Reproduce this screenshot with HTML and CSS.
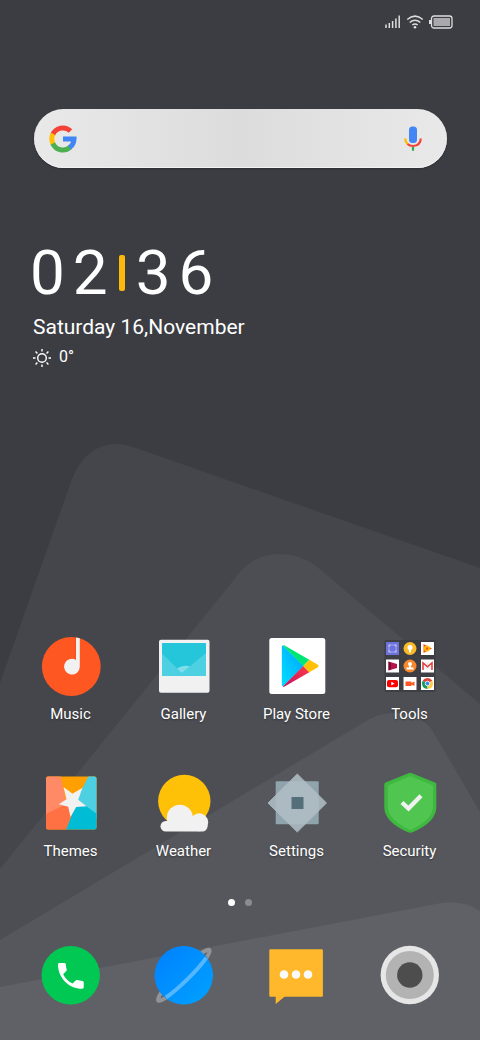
FILE: index.html
```html
<!DOCTYPE html>
<html lang="en">
<head>
<meta charset="utf-8">
<meta name="viewport" content="width=device-width, initial-scale=1">
<title>Home screen</title>
<link rel="stylesheet" href="styles.css">
</head>
<body>
<svg class="wallpaper" viewBox="0 0 480 1040" preserveAspectRatio="none" aria-hidden="true">
  <path fill="#45464b" d="M0 683L72 479Q86 444 117 444Q125 444 133 447L480 568V1040H0Z"/>
  <path fill="#4d4e53" d="M0 869L241 571Q256 554 280 554Q300 554 316 566L480 704V1040H0Z"/>
  <path fill="#56575c" d="M0 940L368 720Q380 713 395 713Q420 713 432 730L480 812V1040H0Z"/>
  <path fill="#606166" d="M0 987L436 904Q462 899 480 911V1040H0Z"/>
</svg>
<main class="screen">
  <header class="status">
    <svg width="16" height="14" viewBox="0 0 16 14" role="img" aria-label="Signal"><path stroke="#dedee0" stroke-width="1.500" d="M1 13V9.500M4.300 13V8M7.600 13V6M10.900 13V3.500M14.200 13V.5"/></svg>
    <svg width="18" height="14" viewBox="0 0 18 14" role="img" aria-label="Wi-Fi"><g fill="none" stroke="#dedee0" stroke-width="1.500"><path d="M1.200 4.500Q9-2.200 16.800 4.500M3.700 7.500Q9 3 14.300 7.500M6.300 10Q9 7.800 11.700 10"/></g><circle cx="9" cy="12.300" r="1.300" fill="#dedee0"/></svg>
    <svg width="24" height="14" viewBox="0 0 24 14" role="img" aria-label="Battery"><rect x="2.500" y="1" width="20.500" height="12" rx="2.500" fill="none" stroke="#dedee0" stroke-width="1.300"/><rect x="4.500" y="3" width="16.500" height="8" fill="#a9a9ac"/><path fill="#dedee0" d="M0 5h2v4H0z"/></svg>
  </header>

  <form class="search" role="search">
    <svg width="28" height="28" viewBox="0 0 28 28" aria-hidden="true"><g fill="none" stroke-width="5"><path stroke="#f44336" d="M3.800 9.500A11 11 0 0 1 21.500 6"/><path stroke="#ffc107" d="M4.100 8.900A11 11 0 0 0 4.100 19.100"/><path stroke="#4caf50" d="M3.800 18.500A11 11 0 0 0 21.200 22.200"/><path stroke="#4285f4" d="M14 14H25A11 11 0 0 1 20.600 22.600"/></g></svg>
    <input class="search-input" type="text" aria-label="Search">
    <button class="mic" type="button" aria-label="Voice search">
      <svg width="20" height="28" viewBox="0 0 20 28" aria-hidden="true"><rect x="6" y="1.500" width="8" height="16.500" rx="3.500" fill="#4285f4"/><g fill="none" stroke-width="2.200"><path stroke="#fbbc05" d="M2.200 13.500Q2.200 17 4.700 19.200"/><path stroke="#f44336" d="M4.500 19Q6.500 21 10 21Q17.500 20.500 17.800 13.500"/><path stroke="#34a853" d="M10 22v3.700"/></g></svg>
    </button>
  </form>

  <section class="clock" aria-label="Clock">
    <div class="time"><span>0</span><span>2</span><i class="time-bar"></i><span>3</span><span>6</span></div>
    <div class="date">Saturday 16,November</div>
    <div class="temp">
      <svg width="20" height="20" viewBox="0 0 20 20" role="img" aria-label="Sunny"><g fill="none" stroke="#fff" stroke-width="1.400"><circle cx="9" cy="11" r="4.300"/><path d="M9 2v2.500M9 17.500V20M0 11h2.500M15.500 11H18M2.600 4.600l1.800 1.800M13.600 15.600l1.800 1.800M2.600 17.400l1.800-1.800M13.600 6.400l1.800-1.800"/></g></svg>
      <span>0°</span>
    </div>
  </section>

  <nav class="apps" aria-label="Apps">
    <a class="app" href="#music">
      <svg class="icon" viewBox="0 0 60 60" aria-hidden="true"><circle cx="30.300" cy="30.500" r="29.400" fill="#ff5722"/><path fill="#d94a1e" opacity=".5" d="M34.300 1.700h1v22h-1z"/><path fill="#f1f1f1" d="M35 1.500l3.800.7V30.500A7.900 7.900 0 1 1 35 23.900Z"/></svg>
      <span>Music</span>
    </a>
    <a class="app" href="#gallery">
      <svg class="icon" viewBox="0 0 60 60" aria-hidden="true"><rect x="5" y="3.700" width="50.500" height="53" rx="2" fill="#f1f1f1"/><path fill="#26c6da" d="M8 7h44v33H8z"/><path fill="#4dd0e1" d="M8 17.500L27.700 37 52 17V40H8z"/><path fill="#80deea" d="M23 32.500Q28.500 28.500 36 30.300L27.700 37Z"/></svg>
      <span>Gallery</span>
    </a>
    <a class="app" href="#play">
      <svg class="icon" viewBox="0 0 60 60" aria-hidden="true">
        <defs><linearGradient id="play-blue" x1="1" y1="0" x2="0" y2="1"><stop offset="0" stop-color="#00a0ff"/><stop offset="1" stop-color="#00e0ff"/></linearGradient><linearGradient id="play-red" x1="1" y1="0" x2="0" y2="1"><stop offset="0" stop-color="#ff3a44"/><stop offset="1" stop-color="#c31162"/></linearGradient></defs>
        <rect x="2.300" y="2" width="56" height="56" rx="2.500" fill="#fff"/>
        <path fill="url(#play-blue)" d="M15.800 9.400Q14.800 9.600 14.800 11V49Q14.800 50.300 15.800 50.600L36.800 30Z"/>
        <path fill="#00e676" d="M15.800 9.400Q16.500 9 17.600 9.600L42.300 23.800 36.300 30Z"/>
        <path fill="url(#play-red)" d="M15.800 50.600Q16.500 51 17.600 50.400L42.300 36.200 36.300 30Z"/>
        <path fill="#ffc107" d="M42.300 23.800L50.500 28.500Q52.500 30 50.500 31.500L42.300 36.200 36.300 30Z"/>
      </svg>
      <span>Play Store</span>
    </a>
    <a class="app" href="#tools">
      <svg class="icon" viewBox="0 0 60 60" aria-hidden="true">
        <rect x="4.500" y="4" width="51" height="52" rx="2" fill="#35363b" opacity=".6"/>
        <g transform="translate(6 6)"><rect width="13" height="13" fill="#6c72d9"/><path fill="none" stroke="#c5c8ff" stroke-width="1.200" d="M3 5V3h2M8 3h2v2M10 8v2H8M5 10H3V8"/><path fill="none" stroke="#a3a8f2" d="M3 5v3M10 5v3M5 3h3M5 10h3"/></g>
        <g transform="translate(23.500 6)"><circle cx="6.500" cy="6.500" r="6.500" fill="#fbb829"/><circle cx="6.500" cy="5.500" r="2.500" fill="#fff"/><path fill="#fff" d="M5.500 7h2v3.500h-2z"/></g>
        <g transform="translate(41 6)"><path fill="#fff" d="M0 0h13v13H0z"/><path fill="#f4511e" d="M2.500 2v9l8.500-4.500z"/><circle cx="6" cy="6.500" r="3" fill="#ffc107"/><circle cx="6" cy="6.500" r="1.200" fill="#f4511e"/></g>
        <g transform="translate(6 23.500)"><path fill="#fff" d="M0 0h13v13H0z"/><path fill="#b8124a" d="M2.500 2L11 4.500v4L2.500 11z"/><path fill="#760c36" d="M2.500 2v9L5 9.500v-6z"/></g>
        <g transform="translate(23.500 23.500)"><circle cx="6.500" cy="6.500" r="6.500" fill="#f5892c"/><circle cx="6.500" cy="4.500" r="2" fill="#fff"/><path fill="#fff" d="M5.500 6h2v2h2.500v2H3V8h2.500z"/></g>
        <g transform="translate(41 23.500)"><path fill="#fff" d="M0 0h13v13H0z"/><path fill="#eceff1" d="M2 3h9v7H2z"/><path fill="none" stroke="#e53935" stroke-width="1.500" d="M2 10.500V3.300l4.500 3.900L11 3.300v7.200"/></g>
        <g transform="translate(6 41)"><path fill="#fff" d="M0 0h13v13H0z"/><rect x="1" y="3" width="11" height="7.300" rx="2" fill="#f00"/><path fill="#fff" d="M5.300 4.800v3.600l3.200-1.800z"/></g>
        <g transform="translate(23.500 41)"><path fill="#fff" d="M0 0h13v13H0z"/><path fill="#ff5722" d="M2 4.500h6v4.500H2zM8 6l3-1.500v4.500L8 7.500z"/></g>
        <g transform="translate(41 41)"><path fill="#fff" d="M0 0h13v13H0z"/><path fill="#db4437" d="M6.500 6.500L1.700 3.800A5.500 5.500 0 0 1 11.300 3.800Z"/><path fill="#0f9d58" d="M6.500 6.500L1.700 3.800A5.500 5.500 0 0 0 6.500 12Z"/><path fill="#ffcd40" d="M6.500 6.500L11.300 3.800A5.500 5.500 0 0 1 6.500 12Z"/><circle cx="6.500" cy="6.500" r="2.300" fill="#4285f4" stroke="#fff" stroke-width=".8"/></g>
      </svg>
      <span>Tools</span>
    </a>
    <a class="app" href="#themes">
      <svg class="icon" viewBox="0 0 60 60" aria-hidden="true">
        <defs><clipPath id="theme-tile"><rect x="5" y="3.500" width="50.500" height="53" rx="2"/></clipPath></defs>
        <g clip-path="url(#theme-tile)"><path fill="#ffa000" d="M5 3h52v54H5z"/><path fill="#ff8a65" d="M5 3h14.500L25.500 30 30 34 5 44z"/><path fill="#4dd0e1" d="M47.500 3H57V46L33 32z"/><path fill="#ff7043" d="M5 41l20-10 8 5-8 21H5z"/><path fill="#00bcd4" d="M25 57l10-26 3-3 19 13.700V57z"/></g>
        <path fill="#f1f1f1" d="M22.500 14l9 6.700 10-6-4.300 12 8.300 6.600-10.300.7L29.500 44l-2.300-10.300-9.400-2.400 7.700-5z"/>
      </svg>
      <span>Themes</span>
    </a>
    <a class="app" href="#weather">
      <svg class="icon" viewBox="0 0 60 60" aria-hidden="true"><circle cx="30.300" cy="28" r="26.200" fill="#ffc107"/><g fill="#f1f1f1"><circle cx="25.800" cy="44.700" r="13"/><circle cx="45.200" cy="49.300" r="9"/><rect x="6.500" y="48" width="47" height="10.500" rx="5.200"/></g></svg>
      <span>Weather</span>
    </a>
    <a class="app" href="#settings">
      <svg class="icon" viewBox="0 0 60 60" aria-hidden="true"><rect x="8.700" y="8.300" width="43" height="43" rx="1" fill="#90a4ae"/><path fill="#b0bec5" stroke="#b0bec5" stroke-linejoin="round" opacity=".88" d="M30.300 1L59.500 30 30.300 59 1 30z"/><path fill="#546e7a" d="M24.500 24h12v12h-12z"/></svg>
      <span>Settings</span>
    </a>
    <a class="app" href="#security">
      <svg class="icon" viewBox="0 0 60 60" aria-hidden="true"><path fill="#3fb83f" d="M28.500.2Q30.300-.9 32 .2L55 9.500Q56.300 10.200 56.300 11.500V34Q56.300 49 32.500 59.300 30.300 60 28 59.300 4.300 49 4.300 34V11.500Q4.300 10.200 5.500 9.500Z"/><path fill="#50c650" d="M30.300 3L53 12.500V34Q52.500 47 30.300 57 8.300 47 7.800 34V12.500Z"/><path fill="none" stroke="#f1f1f1" stroke-width="4.300" d="M22 29.500l6.500 6L41 22.800"/></svg>
      <span>Security</span>
    </a>
  </nav>

  <div class="pages" aria-hidden="true"><i class="dot dot-active"></i><i class="dot"></i></div>

  <nav class="dock" aria-label="Dock">
    <a class="app" href="#phone" aria-label="Phone"><svg class="icon" viewBox="0 0 60 60" aria-hidden="true"><circle cx="29.700" cy="30.300" r="29.200" fill="#00c853"/><path fill="#fff" transform="translate(12.700 13.700) scale(1.430)" d="M6.620 10.790c1.440 2.830 3.760 5.140 6.590 6.590l2.200-2.200c.27-.27.670-.36 1.020-.24 1.120.37 2.330.57 3.570.57.550 0 1 .45 1 1V20c0 .55-.45 1-1 1-9.390 0-17-7.610-17-17 0-.55.450-1 1-1h3.500c.550 0 1 .45 1 1 0 1.250.20 2.450.57 3.570.11.350.03.740-.25 1.020l-2.200 2.200z"/></svg></a>
    <a class="app" href="#browser" aria-label="Browser"><svg class="icon" viewBox="0 0 60 60" aria-hidden="true"><defs><linearGradient id="planet" x1="0" y1="0" x2="1" y2="1"><stop offset="0" stop-color="#0080ff"/><stop offset="1" stop-color="#00a2ff"/></linearGradient></defs><ellipse cx="29.800" cy="30.300" rx="36" ry="5.500" transform="rotate(-44.500 29.800 30.300)" fill="none" stroke="#929397" stroke-width="4"/><circle cx="29.800" cy="30.300" r="29.200" fill="url(#planet)"/><path transform="rotate(-44.500 29.800 30.300)" fill="none" stroke="#fff" stroke-opacity=".33" stroke-width="4" d="M1.500 33.600A36 5.500 0 0 0 58 33.600"/></svg></a>
    <a class="app" href="#messages" aria-label="Messages"><svg class="icon" viewBox="0 0 60 60" aria-hidden="true"><path fill="#ffb82b" d="M3.500 4.300H54.700Q55.900 4.300 55.900 5.500V50.500Q55.900 51.700 54.700 51.700H17.500L8.700 59V51.700H3.500Q2.300 51.700 2.300 50.500V5.500Q2.300 4.300 3.500 4.300Z"/><g fill="#fafafa"><circle cx="17" cy="29.500" r="4.300"/><circle cx="29" cy="29.500" r="4.300"/><circle cx="41" cy="29.500" r="4.300"/></g></svg></a>
    <a class="app" href="#camera" aria-label="Camera"><svg class="icon" viewBox="0 0 60 60" aria-hidden="true"><circle cx="29.800" cy="30" r="29.200" fill="#e6e6e6"/><circle cx="29.800" cy="30" r="24" fill="#b3b3b3"/><circle cx="29.800" cy="30" r="12.700" fill="#4d4d4d"/></svg></a>
  </nav>
</main>
</body>
</html>
```
FILE: styles.css
```css
* {
  box-sizing: border-box;
}

body {
  margin: 0;
  background: #3c3d42;
  color: #fff;
  font-family: Roboto, "Noto Sans", sans-serif;
}

.wallpaper {
  position: absolute;
  inset: 0;
  width: 100%;
  height: 100%;
}

.screen {
  position: relative;
  display: flex;
  flex-direction: column;
  min-height: 100vh;
  padding-bottom: 35px;
}

.status {
  display: flex;
  align-items: center;
  justify-content: flex-end;
  gap: 5px;
  height: 43px;
  padding-right: 27px;
}

.search {
  display: flex;
  align-items: center;
  height: 59px;
  margin: 66px 33px 0 34px;
  padding: 0 24px 0 15px;
  border-radius: 30px;
  background: linear-gradient(90deg, #e9e9e9, #dcdcdc 50%, #e9e9e9);
  box-shadow: 0 1px 2px rgba(0, 0, 0, 0.25), inset 0 -1px 0 #f3f3f3;
}

.search-input {
  flex: 1;
  min-width: 0;
  height: 40px;
  padding: 0 12px;
  border: 0;
  outline: 0;
  background: transparent;
  color: #333;
  font: 18px Roboto, sans-serif;
}

.mic {
  display: flex;
  padding: 0;
  border: 0;
  background: transparent;
}

.clock {
  display: flex;
  flex-direction: column;
  margin: 74px 32px 0 33px;
}

.time {
  display: flex;
  align-items: center;
  gap: 8px;
  margin-left: -3px;
  font-size: 62px;
  line-height: 62px;
}

.time-bar {
  width: 6px;
  height: 36px;
  margin: 0 3px;
  border-radius: 2px;
  background: #fdb90b;
}

.date {
  margin-top: 10px;
  font-size: 21px;
  line-height: 26px;
}

.temp {
  display: flex;
  align-items: center;
  gap: 6px;
  margin-top: 7px;
  font-size: 16px;
  line-height: 20px;
}

.apps,
.dock {
  display: grid;
  grid-template-columns: repeat(4, 1fr);
  padding: 0 14px;
}

.apps {
  row-gap: 50px;
  margin-top: auto;
}

.app {
  display: flex;
  flex-direction: column;
  align-items: center;
  gap: 9px;
  color: #fff;
  font-size: 15px;
  line-height: 18px;
  text-decoration: none;
  text-shadow: 0 1px 2px rgba(0, 0, 0, 0.4);
}

.icon {
  width: 60px;
  height: 60px;
  overflow: visible;
}

.pages {
  display: flex;
  justify-content: center;
  gap: 10px;
  margin: 39px 0;
}

.dot {
  width: 7px;
  height: 7px;
  border-radius: 50%;
  background: #8b8c90;
}

.dot-active {
  background: #fff;
}
```
